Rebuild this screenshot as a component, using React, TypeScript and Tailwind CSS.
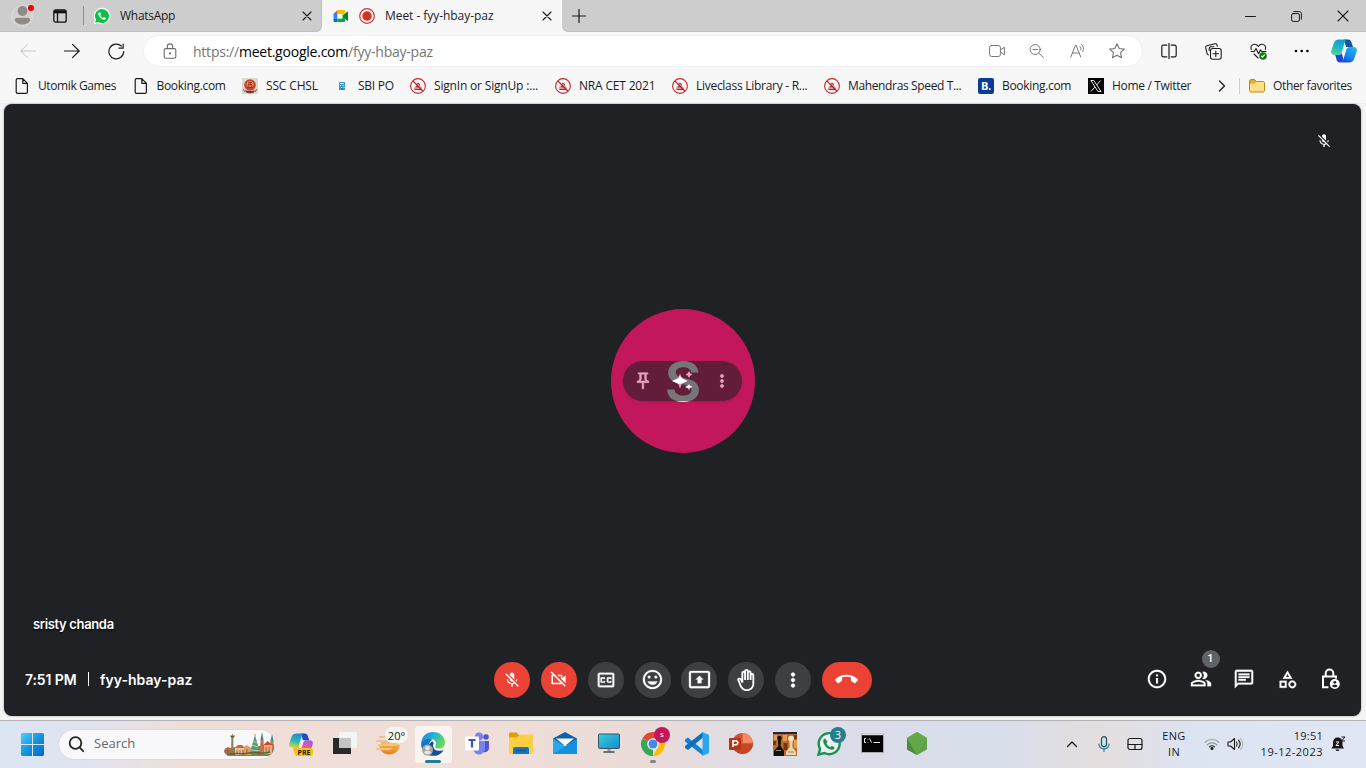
import React from "react";
import {
  MdMicOff,
  MdOutlineVideocamOff,
  MdOutlineClosedCaption,
  MdOutlineMood,
  MdOutlinePresentToAll,
  MdOutlineBackHand,
  MdMoreVert,
  MdCallEnd,
  MdInfoOutline,
  MdOutlinePeopleAlt,
  MdOutlineChat,
  MdOutlineCategory,
  MdOutlinePushPin,
} from "react-icons/md";

type Kids = { children: React.ReactNode };

/* ---------- browser icons ---------- */

const Line = ({ children, size = 16, color = "#1b1b1b", w = 1 }: Kids & { size?: number; color?: string; w?: number }) => (
  <svg width={size} height={size} viewBox={`0 0 ${size} ${size}`} fill="none" stroke={color} strokeWidth={w} strokeLinecap="round" strokeLinejoin="round" className="shrink-0">
    {children}
  </svg>
);

const CloseX = () => (
  <Line size={10} w={1.1}>
    <path d="M1 1l8 8M9 1L1 9" />
  </Line>
);

const FileIcon = () => (
  <Line w={1.2}>
    <path d="M3.500 .7h5.300L13.400 5.300v8.600c0 .8-.5 1.400-1.300 1.400H3.500c-.8 0-1.300-.6-1.300-1.400V2c0-.8.5-1.300 1.300-1.300zM8.800.9v4.400h4.400" />
  </Line>
);

const BlockedIcon = () => (
  <svg width="16" height="16" viewBox="0 0 16 16" fill="none">
    <circle cx="8" cy="8" r="7.400" fill="#fdf6f6" stroke="#c4262c" strokeWidth="1.100" />
    <path d="M4 11.500c-.2-2 .8-3.200 1.900-3.400-.3-2 .5-3.400 2.100-3.400s2.400 1.400 2.100 3.400c1.300.4 2.100 1.400 1.900 3.400z" fill="#dd9da0" />
    <path d="M4.500 11.500h7M6 8.800h2.500M7.200 5.500c1-.8 2.300 0 2.200 1.800" stroke="#b01f27" />
    <path d="M3 3.200l9.800 9.800" stroke="#b01f27" strokeWidth="1.200" />
  </svg>
);

const EmblemIcon = () => (
  <svg width="16" height="16" viewBox="0 0 16 16">
    <rect width="16" height="16" fill="#dcd9ce" />
    <circle cx="8" cy="7" r="5.800" fill="#c8403a" />
    <circle cx="8" cy="6.500" r="3.500" fill="#e0982f" />
    <path d="M6 4h4v3l1 3H5l1-3z" fill="#a52a22" />
    <path d="M6.500 5.500h1M8.800 5.500h1M6.500 8h3" stroke="#f7dc83" />
    <path d="M3 11.500c2 2 8 2 10 0l-1 3c-2 1-6 1-8 0z" fill="#8d2b25" />
    <path d="M1 11l2 3M15 11l-2 3" stroke="#5d7a4a" />
  </svg>
);

const SbiIcon = () => (
  <svg width="16" height="16" viewBox="0 0 16 16">
    <rect x="5" y="4" width="6" height="8" fill="#3b9bd0" />
    <path d="M6 5.500h4M6 7.500h1M8.500 7.500h1M7 9.500h1M9.500 9.500h1" stroke="#c9e8f7" />
    <path d="M8 10v2" stroke="#1c6ea4" />
  </svg>
);

const BookingIcon = () => (
  <span className="flex h-4 w-4 items-center justify-center rounded-[2px] bg-[#0c3b95] text-[11px] font-bold text-white">B.</span>
);

const XIcon = () => (
  <svg width="16" height="16" viewBox="0 0 16 16">
    <rect width="16" height="16" fill="#000" />
    <path d="M2.800 2.500h3L13 13.500h-3z" fill="none" stroke="#e8e8e8" />
    <path d="M12.600 2.500L8.600 7M7 9l-4 4.500" stroke="#e8e8e8" />
  </svg>
);

const FolderIcon = () => (
  <svg width="16" height="16" viewBox="0 0 16 16">
    <path d="M.5 3c0-1 .6-1.500 1.500-1.500h3.500L7.500 3.500H14c1 0 1.500.6 1.500 1.500v7.500c0 1-.6 1.500-1.500 1.500H2c-1 0-1.500-.6-1.500-1.500z" fill="#ffdf81" stroke="#b88a1a" />
    <path d="M1 3c0-.7.400-1 1-1h3.300l1.500 1.700L5.500 5H1z" fill="#f1b82d" stroke="#b88a1a" strokeWidth=".6" />
  </svg>
);

const WhatsAppMark = () => (
  <svg width="18" height="18" viewBox="0 0 18 18">
    <path d="M9 .8a8.200 8.200 0 0 0-7.100 12.300L.8 17.200 5 16.100A8.200 8.200 0 1 0 9 .8z" fill="#fff" />
    <path d="M9 2a7 7 0 0 0-6 10.600l-.8 3.100L5.400 15A7 7 0 1 0 9 2z" fill="#08c343" />
    <path d="M6.600 5.200c-.8.1-1.400.9-1.300 1.900.3 2.500 3 5.300 5.600 5.600 1 .1 1.900-.5 2-1.500l-2-1.100-.8.900c-1.300-.5-2.200-1.400-2.700-2.600l.8-.9-.9-2.200z" fill="#fff" />
  </svg>
);

const MeetMark = () => (
  <svg width="16" height="16" viewBox="0 0 16 16">
    <path d="M.5 6l4-4v4z" fill="#ea4335" />
    <path d="M.5 6h4v4.500h-4z" fill="#2684fc" />
    <path d="M.5 10.500h4V14H1.700C1 14 .5 13.500.5 12.800z" fill="#0066da" />
    <path d="M4.500 2h6.500c.8 0 1.300.5 1.300 1.200V8L9.300 6H4.500z" fill="#ffba00" />
    <path d="M4.500 10.500h4.800V6l3 2v4.800c0 .7-.5 1.200-1.300 1.200H4.500z" fill="#00ac47" />
    <path d="M9.300 6v-.5h3v3z" fill="#ffba00" />
    <path d="M9.800 8l4.200-4.200c.5-.4 1-.1 1 .5v8c0 .6-.6.8-1 .4z" fill="#00832d" />
    <rect x="4.500" y="6" width="4.800" height="4.500" fill="#f7f7f7" />
  </svg>
);

const CopilotMark = ({ size = 26, pre = false }: { size?: number; pre?: boolean }) => {
  const id = pre ? "cpa" : "cpb";
  return (
    <svg width={size} height={size} viewBox="0 0 26 26">
      <defs>
        <linearGradient id={id + "1"} x1="0.500" y1="0" x2="0.200" y2="1">
          <stop offset="0" stopColor={pre ? "#1a8ae0" : "#0f9bd7"} />
          <stop offset="0.500" stopColor={pre ? "#2cb7b0" : "#1db8c4"} />
          <stop offset="1" stopColor={pre ? "#d8dc3a" : "#58d68d"} />
        </linearGradient>
        <linearGradient id={id + "2"} x1="0.800" y1="0" x2="0.200" y2="1">
          <stop offset="0" stopColor={pre ? "#a45be8" : "#27b3f0"} />
          <stop offset="0.600" stopColor={pre ? "#ef5f9c" : "#1485f0"} />
          <stop offset="1" stopColor={pre ? "#f7913d" : "#1844c8"} />
        </linearGradient>
      </defs>
      <path d="M13 1.500h4c2 0 3 1 3.500 3L22 9h-7z" fill={pre ? "#1d4fc0" : "#0b5a97"} />
      <path d="M8 1.500h9c-2 0-2.800 1-3.400 3l-2.600 9c-.7 2.500-1.500 3.500-4 3.500H4c-3.500 0-4.500-2-3.500-5l2.400-7C3.900 2.500 5.500 1.500 8 1.500z" fill={`url(#${id}1)`} />
      <path d="M18 24.500H9c2 0 2.800-1 3.400-3l2.600-9c.7-2.500 1.500-3.500 4-3.500h3c3.500 0 4.500 2 3.500 5l-2.400 7c-1 2.500-2.600 3.500-5.100 3.500z" fill={`url(#${id}2)`} />
      <path d="M12.500 21.500c-.6 2-1.500 3-3.500 3s-3-1-3.500-3L4.300 17H7c2 0 3-.500 3.700-2z" fill={pre ? "#ffb01f" : "#1b49d3"} />
      <path d="M14.800 9h2.400c-1.200.5-1.800 1.700-2.300 3.500l-1.400 4.500h-2.600c1-.6 1.400-1.600 1.800-3z" fill="#f5f3f6" />
    </svg>
  );
};

/* ---------- browser chrome ---------- */

const TabStrip = () => (
  <div className="flex h-8 shrink-0 bg-[#f7f7f7]">
    <div className="flex w-[322px] items-center rounded-br-md border-b border-r border-[#bfbfbf] bg-[#cdcdcd]">
      <div className="relative ml-[11px] flex h-[22px] w-[22px] items-center justify-center rounded-full border border-[#dedad3] bg-[#d4d1cc]">
        <svg width="17" height="19" viewBox="0 0 17 19" fill="#8e8b87">
          <circle cx="8.500" cy="5" r="4.900" />
          <path d="M.8 14.500c0-2 1.200-2.700 2.700-2.700h10c1.500 0 2.700.7 2.700 2.700-1.500 2.500-4.500 4-7.700 4s-6.200-1.500-7.700-4z" />
        </svg>
        <span className="absolute -right-[2px] -top-px h-[6px] w-[6px] rounded-full bg-[#f00008]" />
      </div>
      <div className="ml-5">
        <svg width="14" height="14" viewBox="0 0 14 14" fill="none" stroke="#111" strokeWidth="1.300">
          <rect x=".8" y=".8" width="12.400" height="12.400" rx="2" />
          <path d="M1 2.800h12" strokeWidth="3" />
          <path d="M4.500 4v9" />
        </svg>
      </div>
      <div className="ml-4 h-[19px] w-px bg-[#8c8c8c]" />
      <div className="ml-[9px] mt-px"><WhatsAppMark /></div>
      <span className="ml-[9px] w-[182px] text-[12px] tracking-[-0.28px]">WhatsApp</span>
      <div className="mt-px"><CloseX /></div>
    </div>
    <div className="flex w-[240px] items-center rounded-t-md bg-[#f7f7f7] pl-[11px]">
      <div><MeetMark /></div>
      <svg className="ml-[10px]" width="16" height="16" viewBox="0 0 16 16">
        <circle cx="8" cy="8" r="7.300" fill="none" stroke="#d93025" strokeWidth="1.200" />
        <circle cx="8" cy="8" r="4.700" fill="#d93025" />
      </svg>
      <span className="ml-[10px] w-[157px] text-[12px] tracking-[-0.05px]">Meet - fyy-hbay-paz</span>
      <CloseX />
    </div>
    <div className="flex flex-1 items-center rounded-bl-md border-b border-[#bfbfbf] bg-[#cdcdcd]">
      <div className="ml-[10px]">
        <Line size={14} w={1.200}><path d="M7 .5v13M.5 7h13" /></Line>
      </div>
      <div className="ml-auto mr-[17px] flex items-center gap-[35px] pt-px">
        <Line size={11}><path d="M.5 5.500h10" /></Line>
        <Line size={11}>
          <rect x=".6" y="2.600" width="7.800" height="7.800" rx="1.500" />
          <path d="M2.800.6h5.400c1.300 0 2.200.9 2.200 2.200v5.400" />
        </Line>
        <Line size={12} w={1.100}><path d="M1 1l10 10M11 1L1 11" /></Line>
      </div>
    </div>
  </div>
);

const Toolbar = () => (
  <div className="flex h-[38px] shrink-0 items-center bg-[#f7f7f7]">
    <div className="ml-5"><Line color="#c6c6c6"><path d="M15.500 8H.8M7.500 1.300L.8 8l6.700 6.700" /></Line></div>
    <div className="ml-7"><Line w={1.200}><path d="M.5 8h14.700M8.500 1.300L15.200 8l-6.700 6.700" /></Line></div>
    <div className="ml-7"><Line size={17} w={1.200}><path d="M15.700 8.500A7.400 7.400 0 1 1 13.300 3M15.200 1v4.200H11" /></Line></div>
    <div className="ml-[19px] flex h-[30px] w-[998px] shrink-0 items-center rounded-full bg-white shadow-[0_0_2px_#e2e2e2]">
      <div className="ml-[18px]">
        <Line color="#6b6b6b" w={1.100}>
          <rect x="2.200" y="5.600" width="11.600" height="9.600" rx="1.500" />
          <path d="M5.300 5.500V3.600a2.700 2.700 0 0 1 5.400 0v1.900" />
          <circle cx="8" cy="10.400" r=".5" fill="#6b6b6b" />
        </Line>
      </div>
      <span className="ml-[15px] w-[796px] whitespace-nowrap text-[14px] tracking-[-0.23px] text-[#767676]">
        https://<span className="text-black">meet.google.com</span>/fyy-hbay-paz
      </span>
      <div className="flex items-center gap-6">
        <Line color="#767676">
          <rect x=".6" y="2.500" width="10.800" height="11" rx="2" />
          <path d="M12 6.500l3.400-2.300v7.600L12 9.500" />
        </Line>
        <Line color="#767676">
          <circle cx="6.200" cy="6.500" r="5" />
          <path d="M10 10.200l4.300 4.300M4 6.500h4.400" />
        </Line>
        <div className="pl-px">
          <Line color="#767676">
            <path d="M.8 14L5.600 2h.4l4.700 12M2.500 10h6.700M10 3.500c1 .9 1.200 2.200.8 3.500M11.500 1.500c2.200 1.800 2.600 4.500 1.300 7" />
          </Line>
        </div>
        <div className="-ml-px">
          <Line color="#767676" w={1.100}>
            <path d="M8 .8l2.200 4.700 5.100.6-3.800 3.500 1 5.100L8 12.200l-4.500 2.500 1-5.100L.7 6.100l5.100-.6z" />
          </Line>
        </div>
      </div>
    </div>
    <div className="ml-[19px] flex items-center">
      <Line w={1.200}>
        <path d="M5.800 2.200H2.400c-1 0-1.600.6-1.600 1.600v8.400c0 1 .6 1.600 1.600 1.600h3.400M10.200 2.200h3.400c1 0 1.600.6 1.600 1.600v8.400c0 1-.6 1.600-1.600 1.600h-3.400M8 .3v15.400" />
      </Line>
      <div className="ml-7">
        <Line size={17} w={1.100}>
          <rect x="5.500" y="5.500" width="10.700" height="10.700" rx="2.200" />
          <path d="M10.800 8v5.600M8 10.800h5.600M3.500 12c-.9-.2-1.300-.8-1.500-1.600L.7 4.700C.500 3.700 1 3 1.900 2.800L10 .800c1-.2 1.700.2 1.900 1l.4 1.500M4.200 7.500V5.600c0-1 .7-1.800 1.700-1.800h3" />
        </Line>
      </div>
      <div className="ml-7">
        <Line size={17} w={1.100}>
          <path d="M1.300 6.500C.300 3.500 2 1.300 4.600 1.300c1.700 0 2.900 1 3.700 2.200C9.100 2.300 10.300 1.300 12 1.300c2.600 0 4.300 2.200 3.300 5.200M1 8.500h3.200l1.800-3 2.500 5.200 2-4 1 1.800H16M4 11l4 4" />
          <circle cx="13" cy="13" r="3.800" fill="#107c10" stroke="none" />
          <path d="M11.500 13.200l1 1 2-2.300" stroke="#fff" />
        </Line>
      </div>
      <svg className="ml-[27px]" width="16" height="4" viewBox="0 0 16 4"><circle cx="2" cy="2" r="1.300" /><circle cx="7.700" cy="2" r="1.300" /><circle cx="13.400" cy="2" r="1.300" /></svg>
      <div className="ml-[21px]"><CopilotMark /></div>
    </div>
  </div>
);

const bookmarks: [string, string, () => React.JSX.Element][] = [
  ["w-[118.500px] tracking-[-0.4px]", "Utomik Games", FileIcon],
  ["w-[109.500px] tracking-[-0.32px]", "Booking.com", FileIcon],
  ["w-[92px] tracking-[-0.15px]", "SSC CHSL", EmblemIcon],
  ["w-[76px] tracking-[-0.25px]", "SBI PO", SbiIcon],
  ["w-[145px] tracking-[-0.18px]", "SignIn or SignUp :...", BlockedIcon],
  ["w-[117px] tracking-[-0.18px]", "NRA CET 2021", BlockedIcon],
  ["w-[152px] tracking-[-0.28px]", "Liveclass Library - R...", BlockedIcon],
  ["w-[154px] tracking-[-0.36px]", "Mahendras Speed T...", BlockedIcon],
  ["w-[110px] tracking-[-0.32px]", "Booking.com", BookingIcon],
  ["w-[128px] tracking-[-0.32px]", "Home / Twitter", XIcon],
];

const Bookmarks = () => (
  <div className="flex h-[34px] shrink-0 items-center border-b border-[#ededed] bg-[#f7f7f7] pb-px pl-[14px] text-[12px]">
    {bookmarks.map(([style, name, Icon], i) => (
      <div key={i} className={`flex shrink-0 items-center gap-2 whitespace-nowrap ${style}`}>
        <Icon />
        {name}
      </div>
    ))}
    <Line size={12} w={1.300}><path d="M3.500 1l5 5-5 5" /></Line>
    <div className="ml-[11px] mr-[9px] h-4 w-px bg-[#cfcfcf]" />
    <div className="flex items-center gap-2 whitespace-nowrap tracking-[-0.36px]"><FolderIcon />Other favorites</div>
  </div>
);

/* ---------- meeting ---------- */

const Round = ({ children, red = false }: Kids & { red?: boolean }) => (
  <button className={`flex h-9 w-9 items-center justify-center rounded-full pb-px text-white ${red ? "bg-[#ea4335]" : "bg-[#3c4043]"}`}>{children}</button>
);

const bold = "[&>path:not([fill=none])]:[stroke-width:0.7]";
const semi = "[&>path:not([fill=none])]:[stroke-width:0.25]";

const LockPerson = () => (
  <svg width="22" height="22" viewBox="0 0 22 22" fill="none" stroke="#fff" strokeWidth="2">
    <path d="M9.500 19.300H4V8.400h13v2M6.700 8.200V5.400a3.800 3.800 0 0 1 7.600 0v2.800" />
    <circle cx="15.800" cy="16" r="5" fill="#fff" stroke="none" />
    <circle cx="15.800" cy="14.300" r="1.400" fill="#202124" stroke="none" />
    <path d="M13 18c1-1.700 4.600-1.700 5.600 0-1.300 1.700-4.300 1.700-5.600 0z" fill="#202124" stroke="none" />
  </svg>
);

const Sparkles = () => (
  <svg width="22" height="20" viewBox="0 0 22 20" fill="#e8a0bf" className="-mr-[2px]">
    <path d="M8 2.500l2 5.200 5 2.300-5 2.300-2 5.200-2-5.200L1 10l5-2.300z" />
    <path d="M0 10l6-2.700 2-2 3 2.400 4.500 2.300L10 12.500l-4 .3z" fill="#fff" />
    <path d="M17 0l1.200 2.300 2.300 1.200-2.300 1.200L17 7l-1.200-2.300-2.300-1.200 2.300-1.200z" />
    <path d="M17 12.500l1.200 2.300 2.300 1.200-2.300 1.200L17 19.500l-1.200-2.300-2.300-1.200 2.300-1.200z" />
    <path d="M13 16l3.300-1.700 4 1-3.400 1.700z" fill="#fff" />
  </svg>
);

const Meeting = () => (
  <main className="ml-1 mr-[5px] flex h-[612px] shrink-0 flex-col rounded-lg bg-[#202124] text-white shadow-[0_0_2px_#888]">
    <div className="flex h-[204px] justify-end pr-[29px] pt-[29px]"><MdMicOff size={16} /></div>
    <div className="flex h-[146px] justify-center">
      <div className="relative mt-[1px] flex h-36 w-36 items-center justify-center rounded-full bg-[#c2185b]">
        <span className="ml-px text-[57px] font-semibold leading-none text-[#f4f4f4] [font-family:Inter,sans-serif]">S</span>
        <div className="absolute left-3 top-[52px] flex h-10 w-[119px] items-center justify-between rounded-full bg-[#202124]/60 px-[10px] text-[#e8a0bf] shadow">
          <MdOutlinePushPin size={20} className={bold} />
          <Sparkles />
          <MdMoreVert size={20} className={bold} />
        </div>
      </div>
    </div>
    <div className="flex h-[190px] items-end pb-[11px] pl-[29px] text-[13px] font-semibold leading-[18px] tracking-[-0.35px] [font-family:Inter,sans-serif]">
      <span className="[text-shadow:0_1px_2px_#000]">sristy chanda</span>
    </div>
    <div className="grid h-[72px] grid-cols-[490px_378px_1fr] items-center">
      <div className="flex items-center pb-0.5 pl-[21px] text-[14px] font-semibold [font-family:Inter,sans-serif]">
        <span className="w-[63px] whitespace-nowrap tracking-[-0.1px]">7:51 PM</span>
        <span className="h-[14px] w-px bg-white" />
        <span className="ml-[11px] tracking-[0.03px]">fyy-hbay-paz</span>
      </div>
      <div className="flex items-center justify-between">
        <Round red><MdMicOff size={18} /></Round>
        <Round red><MdOutlineVideocamOff size={19} /></Round>
        <Round><MdOutlineClosedCaption size={22} className={semi} /></Round>
        <Round><MdOutlineMood size={23} className={semi} /></Round>
        <Round><MdOutlinePresentToAll size={23} className={semi} /></Round>
        <Round><MdOutlineBackHand size={22} /></Round>
        <Round><MdMoreVert size={22} className={bold} /></Round>
        <button className="flex h-9 w-[50px] items-center justify-center rounded-full bg-[#ea4335] pb-px"><MdCallEnd size={23} /></button>
      </div>
      <div className="flex items-center justify-between pb-0.5 pl-[274px] pr-5">
        <MdInfoOutline size={22} className={semi} />
        <div className="relative">
          <MdOutlinePeopleAlt size={22} className={semi} />
          <span className="absolute -top-[18px] left-[12px] flex h-[18px] w-[18px] items-center justify-center rounded-full bg-[#5f6368] text-[11px] font-medium [font-family:Roboto,sans-serif]">1</span>
        </div>
        <MdOutlineChat size={22} className={semi} />
        <MdOutlineCategory size={21} className={semi} />
        <LockPerson />
      </div>
    </div>
  </main>
);

/* ---------- taskbar ---------- */

const Slot = ({ children }: Kids) => <div className="relative flex h-11 w-11 shrink-0 items-center justify-center">{children}</div>;

const Art = ({ children }: Kids) => (
  <svg width="24" height="24" viewBox="0 0 24 24" className="overflow-visible">{children}</svg>
);

const StartIcon = () => (
  <svg width="23" height="23" viewBox="0 0 23 23">
    <defs>
      <linearGradient id="win" x1="0" y1="0" x2="1" y2="1">
        <stop offset="0" stopColor="#4fd0fb" />
        <stop offset=".5" stopColor="#1593e0" />
        <stop offset="1" stopColor="#0067c4" />
      </linearGradient>
    </defs>
    <path d="M1 0h10v11H0V1zM12 0h10l1 1v10H12zM0 12h11v11H1l-1-1zM12 12h11v10l-1 1H12z" fill="url(#win)" />
  </svg>
);

const CityArt = () => (
  <svg width="51" height="25" viewBox="0 0 51 25" className="shrink-0">
    <path d="M0 19c1-4 4-4 7-3l8-2 12 2 12-3 11-1v5c-1 4-3 6-6 7H6c-4-1-6-3-6-5z" fill="#8d7a4d" />
    <path d="M1 17l3-2 3 3v4H3z" fill="#b8693d" />
    <path d="M7.300 4h2v16h-2z" fill="#8b7a5e" />
    <path d="M6 3.500h5l-1 2H7zM8 2h1v2z" fill="#6c5a44" />
    <path d="M11 16l3-3h4l3 4v6H11z" fill="#e5c497" />
    <path d="M11 16l3-3h4l3 3z" fill="#c9683f" />
    <path d="M20 15l3-2 4 3v7h-7z" fill="#d9a06b" />
    <path d="M31 3l2 7 1.500 5 1.500 7H26l1.500-7 1.500-5z" fill="#5a9a72" />
    <path d="M29 9l4 2M28 13l6 2M27 18l9 1" stroke="#cfe3c6" strokeWidth=".8" />
    <path d="M38 0l1.600 8h-3.200zM48 2l1.600 7h-3.200z" fill="#3f8f76" />
    <path d="M36.400 8h3.200v14h-3.200zM46.400 9h3.200v8h-3.200z" fill="#c9744f" />
    <path d="M40 12h8v10h-8z" fill="#ecab78" />
    <path d="M39.500 13l4-4 5.500 4z" fill="#c4502e" />
    <path d="M42 15v5M45 15v5M38 11v3M13 18v3M16 18v3M23 17v4M4 18v3" stroke="#8d4d35" strokeWidth=".8" />
    <path d="M3 23c9-3 16 0 22-2s13 2 21-1" stroke="#506b3b" fill="none" strokeWidth="1.500" />
    <path d="M19 18v5M35 19v4" stroke="#a9362b" />
    <circle cx="31" cy="3" r="1.100" fill="#e9bf3b" />
  </svg>
);

const EdgeArt = () => (
  <Art>
    <defs>
      <linearGradient id="edg" x1="0" y1="0" x2="1" y2=".5">
        <stop offset="0" stopColor="#1b84d0" />
        <stop offset=".5" stopColor="#25b0d8" />
        <stop offset="1" stopColor="#63dc58" />
      </linearGradient>
    </defs>
    <path d="M.2 10.500C1 4 6 0 12 0c7 0 12 5 12 10.500 0 4-3 6-6.500 6-3 0-4-1.500-3-3 1.300-2 .5-6-4-6.500C6 6.500 2 8 .2 10.500z" fill="url(#edg)" />
    <path d="M.2 10.500C3 6.500 9 6 11.500 8c-4 1-6 9 .5 12 3 1.400 7 1 10-1-2 3-6 5-10 5C5 24-.8 18 .2 10.500z" fill="#1177c9" />
    <path d="M11 9.500c-6 3-4 13 4 14 4-1 6-3 7.500-5.500-5 2-10 .5-10.500-4-.2-1.500 1-2.500.5-3.500-.3-.7-1-1-1.500-1z" fill="#154f92" />
    <circle cx="6.500" cy="18" r="5.500" fill="#aaa6a2" />
    <circle cx="6.500" cy="16" r="2.300" fill="#e8e6e4" />
    <path d="M3 20.500c1-2.500 6-2.500 7 0-2 2-5 2-7 0z" fill="#e8e6e4" />
  </Art>
);

const Apps = () => (
  <>
    <Slot>
      <CopilotMark size={24} pre />
      <span className="absolute bottom-[10px] left-[16px] flex h-[8px] w-[18px] items-center justify-center rounded-[2px] bg-[#fdc400] text-[7px] font-bold leading-none">PRE</span>
    </Slot>
    <Slot>
      <Art>
        <path d="M0 6h18v16H0z" fill="#292929" />
        <path d="M6 0h18v16H6z" fill="#f5f5f5" />
        <path d="M6 6h12v10H6z" fill="#c4c4c4" />
      </Art>
    </Slot>
    <Slot>
      <Art>
        <defs><linearGradient id="sun" x1="0" y1="0" x2="0" y2="1"><stop stopColor="#f5c04a" /><stop offset="1" stopColor="#ea7a1c" /></linearGradient></defs>
        <path d="M1.500 12.500h21.500C22.500 19 17.500 22.500 12 22.500S3 19 1.500 12.500z" fill="url(#sun)" />
        <path d="M3 5h9M0 9h20M2 13h16M0 17h14" stroke="#efc583" strokeWidth="2.200" strokeLinecap="round" />
        <path d="M4 11h16M6 15h15M12 18h8" stroke="#ee9430" strokeWidth="1.200" />
      </Art>
      <span className="absolute left-[18px] top-[5px] flex h-4 w-[23px] items-center justify-center rounded-full bg-[#f8f4f2] text-[11px] leading-none">20°</span>
    </Slot>
    <Slot>
      <div className="flex h-[39px] w-[39px] flex-col items-center rounded-[4px] border border-[#eadfdb] bg-[#faf3f0] pt-[6px]">
        <EdgeArt />
        <span className="mt-[4px] h-[3px] w-4 shrink-0 rounded-full bg-[#1e7f91]" />
      </div>
    </Slot>
    <Slot>
      <Art>
        <circle cx="14" cy="4.500" r="4" fill="#7b83eb" />
        <circle cx="21" cy="5" r="2.800" fill="#5059c9" />
        <path d="M17 9h7v7c0 3-3 5-6 4z" fill="#5059c9" />
        <path d="M8 9h12v7c0 4-3 6.500-6 6.500S8 20 8 16z" fill="#7b83eb" />
        <rect y="4.500" width="14" height="14" rx="1" fill="#fff" />
        <path d="M3.500 8h7M7 8v7.500" stroke="#464eb8" strokeWidth="2.200" />
      </Art>
    </Slot>
    <Slot>
      <Art>
        <path d="M0 2c0-1 .5-1.500 1.500-1.500h6L10 3h5v4H0z" fill="#dfa000" />
        <path d="M0 5.500h8L11 2.500h11.500c1 0 1.500.5 1.500 1.500V22H0z" fill="#ffcf42" />
        <path d="M4 22v-5c0-1.500 1-2 2-2h12c1 0 2 .5 2 2v5z" fill="#1577c4" />
        <path d="M7 18.500h10" stroke="#0f5599" strokeWidth="1.500" />
      </Art>
    </Slot>
    <Slot>
      <Art>
        <path d="M0 6.500L12 0l12 6.500V13H0z" fill="#1160ac" />
        <path d="M0 6.500l24 15.500H0z" fill="#29a9ea" />
        <path d="M24 6.500L0 22h24z" fill="#1490df" />
        <path d="M3 6.500h18L12 14z" fill="#f6fafd" />
      </Art>
    </Slot>
    <Slot>
      <Art>
        <defs><linearGradient id="pc" x1="0" y1="0" x2="1" y2="1"><stop stopColor="#35d0dd" /><stop offset="1" stopColor="#1789c9" /></linearGradient></defs>
        <rect x="1.500" y="2" width="21" height="14.500" rx="1" fill="url(#pc)" stroke="#3c5562" />
        <path d="M10.500 17h3v3h-3z" fill="#8d959b" />
        <path d="M6.500 20h11" stroke="#5b646b" strokeWidth="1.800" />
      </Art>
    </Slot>
    <Slot>
      <Art>
        <path d="M12 12L1.600 6A12 12 0 0 1 22.400 6z" fill="#ea4335" />
        <path d="M12 12v12A12 12 0 0 1 1.600 6z" fill="#34a853" />
        <path d="M12 6h10.400A12 12 0 0 1 12 24l5-9z" fill="#fbbc04" />
        <circle cx="12" cy="12" r="5.800" fill="#fff" />
        <circle cx="12" cy="12" r="4.500" fill="#4285f4" />
      </Art>
      <span className="absolute left-[23px] top-[5px] flex h-4 w-4 items-center justify-center rounded-full bg-[#c2185b] pb-0.5 text-[8px] text-white">s</span>
      <span className="absolute bottom-[3px] h-[3px] w-[6px] rounded-full bg-[#858585]" />
    </Slot>
    <Slot>
      <Art>
        <path d="M0 7.500l3-2L18 18v5.500L0 9.500z" fill="#1683ce" />
        <path d="M0 16l3 2L18 5.500V0L0 14z" fill="#0f70b8" />
        <path d="M17.500 0l6.500 3v18l-6.500 3z" fill="#29a6ed" />
      </Art>
    </Slot>
    <Slot>
      <Art>
        <circle cx="13.500" cy="11.500" r="10.500" fill="#d35230" />
        <path d="M13.500 1A10.500 10.500 0 0 1 24 11.500H13.500z" fill="#f2886a" />
        <path d="M13.500 11.500H24a10.500 10.500 0 0 1-20 4.500z" fill="#c54524" />
        <rect y="6" width="12" height="12" rx="1" fill="#b93414" />
        <path d="M4 15V8.800h2.500c3 0 3 4 0 4H4" fill="none" stroke="#fff" strokeWidth="1.600" />
      </Art>
    </Slot>
    <Slot>
      <Art>
        <path d="M0 0h24v24H0z" fill="#bf6b2a" />
        <path d="M0 0h24v2H0z" fill="#16264d" />
        <path d="M1 3h3v5H1zM10 3h4v6h-4zM21 8h3v8h-3z" fill="#e69a4b" />
        <path d="M0 9h3v4H0zM10.500 11h4v7h-4zM21 3h3v4h-3z" fill="#7c3311" />
        <circle cx="6.500" cy="6" r="2.300" fill="#111" />
        <path d="M5 8h3l-.3 6L11 19v5H1v-5l4.300-5z" fill="#111" />
        <circle cx="18" cy="6.500" r="2.800" fill="#f4e9c9" />
        <path d="M16.300 9h3.400l-.4 6 3.700 5v3H13v-3l3.700-5z" fill="#ead7ae" />
        <path d="M3 18.500h5M15 20h6" stroke="#998a68" />
      </Art>
    </Slot>
    <Slot>
      <Art>
        <path d="M1.500 22.500l1.600-5.600A10.500 10.500 0 1 1 7.400 21z" fill="#eaf1ef" stroke="#1b8f55" strokeWidth="2.400" />
        <path d="M8 6.500c-1.500.4-2 1.600-1.700 3.200.7 4 4 7.300 8 8 1.700.3 3-.6 3.400-2.300l-3-1.700-1.300 1.500c-1.800-.7-3.300-2.200-4-4l1.200-1.400z" fill="#1b8f55" />
      </Art>
      <span className="absolute left-[23px] top-[5px] flex h-4 w-4 items-center justify-center rounded-full bg-[#22808f] text-[11px] text-white">3</span>
    </Slot>
    <Slot>
      <Art>
        <rect x=".5" y="2" width="22" height="18.500" fill="#050505" stroke="#aaa" />
        <path d="M1 2.500h21" stroke="#ddd" strokeWidth="1.500" />
        <path d="M5 6.500H3.500v4H5M7 7.500v.5M7 10v.5M8.500 6.500l2 4M12.500 10.500H19" fill="none" stroke="#eee" />
      </Art>
    </Slot>
    <Slot>
      <Art>
        <path d="M12 0l10 6v11.500L12 23 2 17.500V6z" fill="#5fa04e" />
        <path d="M2 6l10 17-10-5.500z" fill="#4a8c42" />
        <path d="M12 0l10 6L12 23 2 6z" fill="#65a944" opacity=".7" />
      </Art>
    </Slot>
  </>
);

const Taskbar = () => (
  <footer className="mt-[4px] flex h-12 shrink-0 items-center border-t border-[#b4b4b8] bg-[linear-gradient(90deg,#dce5f3_0px,#e0e3ef_90px,#efdfd9_180px,#f0dfd8_480px,#eadbd9_650px,#dcdde7_780px,#d8deeb_1000px,#e5dedf_1100px,#dce3f1_1190px,#e0e6f4_1366px)] pl-[21px]">
    <StartIcon />
    <div className="ml-[14px] flex h-[31px] w-[218px] shrink-0 items-center rounded-full border border-[#d8d8de] bg-[#f8f8fb] text-[13px] text-[#666]">
      <div className="ml-[9px]">
        <Line size={17} w={1.800} color="#222"><circle cx="7.500" cy="7" r="5.800" /><path d="M11.700 11.500l3.500 3.700" /></Line>
      </div>
      <span className="ml-[9px] w-[130px] pb-px">Search</span>
      <CityArt />
    </div>
    <div className="ml-[3px] flex pb-px"><Apps /></div>
    <div className="ml-auto mr-[20px] flex items-center pb-px text-[11px]">
      <Line size={12} w={1.400}><path d="M1.500 8.500L6 4l4.500 4.500" /></Line>
      <div className="ml-[18px]">
        <Line size={16} color="#27505c" w={1.200}>
          <rect x="5.500" y=".7" width="5" height="10" rx="2.500" fill="#c9e4ea" />
          <path d="M3 8c0 3 2 4.800 5 4.800S13 11 13 8M8 13v2.300" stroke="#1e7f91" />
        </Line>
      </div>
      <div className="ml-[15px]">
        <Line size={16} w={1.200}><rect x="1" y="2.500" width="14" height="11" rx="2" /><path d="M1 8.500h14M8 8.500v5" /></Line>
      </div>
      <div className="ml-[14px] w-[34px] text-center leading-4 tracking-[0.3px]">ENG<br />IN</div>
      <div className="ml-[13px]">
        <Line size={16} w={1.100}>
          <path d="M1 6.500C5 2.300 11 2.300 15 6.500" stroke="#aeb2bb" />
          <path d="M3.200 8.800c2.800-2.700 6.800-2.700 9.600 0" stroke="#858992" />
          <path d="M5.500 10.800c1.500-1.300 3.500-1.300 5 0" />
          <circle cx="8" cy="12.500" r="1" fill="#111" />
        </Line>
      </div>
      <div className="ml-[7px]">
        <Line size={17} w={1.100}>
          <path d="M1 6h2.500L7.500 2.500v11L3.500 10H1zM9.500 6c1 1.300 1 2.700 0 4M11.500 4.200c2 2.300 2 5.300 0 7.600" />
          <path d="M13.500 2.500c3 3.300 3 7.700 0 11" stroke="#aaa" />
        </Line>
      </div>
      <div className="ml-[7px] w-[72px] whitespace-nowrap text-right leading-4">
        <span className="tracking-[0.25px]">19:51</span><br /><span className="tracking-[0.5px]">19-12-2023</span>
      </div>
      <svg className="ml-[8px]" width="15" height="16" viewBox="0 0 15 16">
        <path d="M2 10V6.500C2 3.500 4 1.500 6.500 1.500c3 0 5 2 5 5V10l1.500 2.500H.3zM4.500 13.500h4c-.5 2-3.500 2-4 0z" fill="#171717" />
        <path d="M5 6h3L5 9.500h3" fill="none" stroke="#fff" />
        <path d="M10.500 1h3.500l-3.500 4H14" fill="none" stroke="#171717" />
      </svg>
    </div>
  </footer>
);

export default function App() {
  return (
    <div className="flex h-[768px] w-[1366px] flex-col overflow-hidden bg-[#f4f4f4] text-[#1b1b1b] [font-family:'Open_Sans','Noto_Sans',sans-serif]">
      <TabStrip />
      <Toolbar />
      <Bookmarks />
      <Meeting />
      <Taskbar />
    </div>
  );
}
